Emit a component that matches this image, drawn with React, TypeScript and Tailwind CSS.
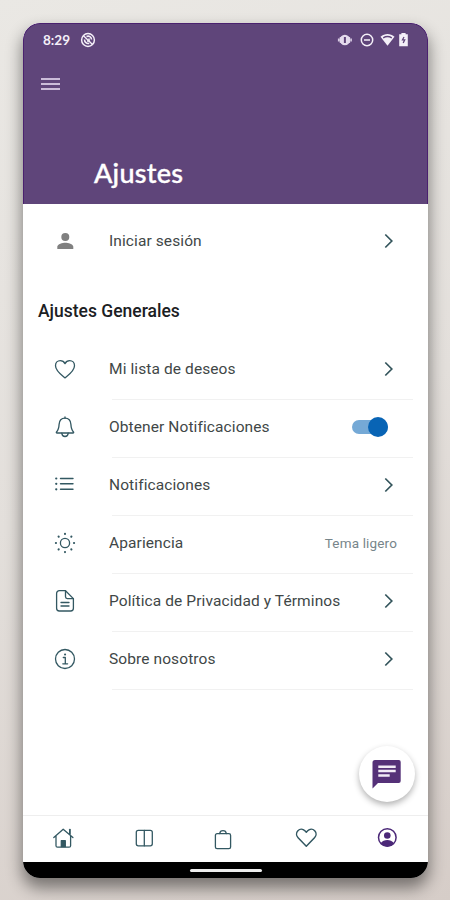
import type { ReactNode } from "react";

function IconBox({ children, className = "" }: { children: ReactNode; className?: string }) {
  return (
    <svg
      width="24"
      height="24"
      viewBox="0 0 24 24"
      fill="none"
      stroke="currentColor"
      strokeWidth="1.3"
      strokeLinecap="round"
      strokeLinejoin="round"
      className={`shrink-0 ${className}`}
      aria-hidden
    >
      {children}
    </svg>
  );
}

function HeartIcon() {
  return (
    <IconBox>
      <path d="M12 20.9C8.6 18.1 2.5 13.8 2.5 8.7c0-3 2.1-5 4.8-5 2 0 3.8 1.1 4.7 2.9.9-1.8 2.7-2.9 4.7-2.9 2.7 0 4.8 2 4.8 5 0 5.100-6.100 9.400-9.500 12.200Z" />
    </IconBox>
  );
}

function BellIcon() {
  return (
    <IconBox>
      <path d="M12 3.200c-3.600 0-5.700 2.600-5.900 6.200-.2 3.600-.4 5.400-2.600 7.600-.4.500-.1 1 .5 1h16c.6 0 .9-.5.5-1-2.200-2.200-2.400-4-2.600-7.600-.2-3.600-2.300-6.200-5.900-6.200Z" />
      <path d="M12 3.200V2M8.800 18.200c.2 2 1.500 3.300 3.200 3.300s3-1.300 3.200-3.300" />
    </IconBox>
  );
}

function ListIcon() {
  return (
    <IconBox>
      <path d="M7.500 5.500h12.500M7.500 10.800h12.500M7.500 16.300h12.500" strokeWidth="1.400" />
      <path d="M3.200 5.500h.1M3.200 10.800h.1M3.200 16.300h.1" strokeWidth="2.200" />
    </IconBox>
  );
}

function SunIcon() {
  return (
    <IconBox>
      <circle cx="12" cy="12" r="4.600" />
      <path
        d="M12 2.900v.1M12 21v.1M2.900 12h.1M21 12h.1M5.600 5.600l.1.1M18.300 18.300l.1.1M5.600 18.400l.1-.1M18.300 5.700l.1-.1"
        strokeWidth="2.100"
      />
    </IconBox>
  );
}

function DocumentIcon() {
  return (
    <IconBox>
      <path d="M12.500 1.700H6.300a2.700 2.700 0 0 0-2.700 2.700v14.900A2.700 2.700 0 0 0 6.300 22h11.400a2.700 2.700 0 0 0 2.700-2.700V9.600Z" />
      <path d="M12.500 1.700v6.100c0 1 .8 1.800 1.800 1.800h6.100M8 13.500h8M8 17h8" />
    </IconBox>
  );
}

function InfoIcon() {
  return (
    <IconBox>
      <circle cx="12" cy="12" r="9.500" />
      <path d="M10.300 10.500h2v6.200M9.800 16.800h4.800" />
      <path d="M12 7.400h.1" strokeWidth="2" />
    </IconBox>
  );
}

function ChevronIcon() {
  return (
    <IconBox className="text-[#33545b]">
      <path d="m8.300 5.500 6.500 6.500-6.500 6.500" strokeWidth="1.700" strokeLinecap="butt" strokeLinejoin="miter" />
    </IconBox>
  );
}

function HomeIcon() {
  return (
    <IconBox>
      <path d="M2.800 11.500 12.200 3.200l9.700 8.300M5 9.700v10c0 .9.600 1.500 1.500 1.500h11.600c.9 0 1.500-.6 1.500-1.500v-10" />
      <path d="M18.900 8V3.600" strokeWidth="1.800" />
      <path d="M10.300 14.700h4v6h-4Z" fill="currentColor" />
    </IconBox>
  );
}

function ColumnsIcon() {
  return (
    <IconBox>
      <rect x="4.300" y="4.300" width="16" height="15.500" rx="2" />
      <path d="M12.300 4.300v15.500" />
    </IconBox>
  );
}

function BagIcon() {
  return (
    <IconBox>
      <path d="M6.100 6.700h11.800c1 0 1.700.7 1.700 1.700v11.500c0 1-.7 1.800-1.700 1.800H6.100c-1 0-1.700-.8-1.700-1.800V8.400c0-1 .7-1.700 1.700-1.700Z" />
      <path d="M8.700 6.500C8.900 4.800 10.200 3.600 12 3.600s3.100 1.200 3.300 2.900" />
    </IconBox>
  );
}

function NavHeartIcon() {
  return (
    <IconBox>
      <path
        d="m12.300 20.200-8.200-8.400c-2-2.100-2-5.200-.2-7.100 2-2 5-1.900 7 .1l1.400 1.400 1.400-1.400c2-2 5-2.100 7-.1 1.800 1.900 1.800 5-.2 7.100Z"
        strokeWidth="1.500"
      />
    </IconBox>
  );
}

function ProfileIcon() {
  return (
    <IconBox className="text-[#4b2878]">
      <circle cx="12.300" cy="11.500" r="8.800" strokeWidth="1.500" />
      <circle cx="12.300" cy="9.500" r="3.300" fill="currentColor" stroke="none" />
      <path
        d="M5.700 17.200c1.600-2 4-3.100 6.600-3.100s5 1.100 6.600 3.100c-1.600 2-4 3.300-6.600 3.300s-5-1.300-6.600-3.300Z"
        fill="currentColor"
        stroke="none"
      />
    </IconBox>
  );
}

function StatusBar() {
  return (
    <div className="flex h-[32px] items-center justify-between pl-[19px] pr-[18px] text-[#f4eff8]">
      <div className="flex items-center gap-[9px]">
        <span className="w-7 pt-px font-['Lato',sans-serif] text-[13.5px] font-bold leading-none">8:29</span>
        <svg width="16" height="16" viewBox="0 0 16 16" fill="none" stroke="currentColor" aria-hidden>
          <circle cx="8" cy="8" r="6.400" strokeWidth="1.500" />
          <path d="m3.500 3.800 9 8.700" strokeWidth="1.400" />
          <path d="M6.500 4.500c2.500-1 5 .5 5 3M4.500 7.500c0 2.800 2.300 4.500 4.700 3.800M7 9h2V6.500" strokeWidth="1.600" />
        </svg>
      </div>
      <svg width="72" height="16" viewBox="0 0 72 16" fill="none" stroke="currentColor" aria-hidden>
        <path d="M1.700 6.500v3M3.500 5v6M14.100 6.500v3M12.300 5v6" strokeWidth="1.600" stroke="#d9cce4" />
        <circle cx="7.900" cy="8" r="5.200" fill="#e5dbed" stroke="none" />
        <path d="M7.900 5v6" stroke="#5f457a" strokeWidth="2" />
        <circle cx="30" cy="8" r="5.700" strokeWidth="1.500" />
        <path d="M27 8h6" strokeWidth="1.700" />
        <path d="M43.500 4.700c4.300-3.500 9.700-3.500 14 0L50.500 13.800Z" fill="currentColor" stroke="none" />
        <path d="M46.200 5.800c2.700-1.600 5.900-1.600 8.600 0" stroke="#5f457a" strokeWidth="1.500" />
        <path d="M62.200 2.300h2.200V1h4.200v1.300h2.200v12h-8.600Z" fill="currentColor" stroke="none" />
        <path d="m67 5-1.500 2.800h2.200L66.200 11" stroke="#5f457a" strokeWidth="1.300" />
      </svg>
    </div>
  );
}

interface SettingsRow {
  icon: ReactNode;
  label: string;
  control: ReactNode;
}

const toggle = (
  <div className="mr-[25px] flex h-[14px] w-[36px] items-center justify-end rounded-full bg-[#75a9d6]">
    <div className="size-5 shrink-0 rounded-full bg-[#0864b5]" />
  </div>
);

const chevron = (
  <div className="mr-3">
    <ChevronIcon />
  </div>
);

const rows: SettingsRow[] = [
  { icon: <HeartIcon />, label: "Mi lista de deseos", control: chevron },
  { icon: <BellIcon />, label: "Obtener Notificaciones", control: toggle },
  { icon: <ListIcon />, label: "Notificaciones", control: chevron },
  {
    icon: <SunIcon />,
    label: "Apariencia",
    control: <span className="mr-4 text-[13.5px] tracking-[0.15px] text-[#77858a]">Tema ligero</span>,
  },
  { icon: <DocumentIcon />, label: "Política de Privacidad y Términos", control: chevron },
  { icon: <InfoIcon />, label: "Sobre nosotros", control: chevron },
];

export default function App() {
  return (
    <div className="h-[900px] w-[450px] overflow-hidden bg-linear-160 from-[#eae8e4] via-[#e3dfdb] to-[#d6cdc8] pl-[23px] pt-[23px] font-['Roboto',sans-serif]">
      <div className="relative flex h-[855px] w-[405px] flex-col overflow-hidden rounded-[17px] bg-white shadow-[0_9px_16px_1px_rgba(0,0,0,0.45)]">
        <header className="h-[181px] shrink-0 rounded-t-[17px] border border-b-0 border-[#4a216f] bg-[#5f457a]">
          <StatusBar />
          <div className="flex h-[56px] items-center pl-[17px]">
            <div className="flex w-[19px] flex-col gap-[3px]">
              <span className="h-[2px] bg-[#cbbcd9]" />
              <span className="h-[2px] bg-[#cbbcd9]" />
              <span className="h-[2px] bg-[#cbbcd9]" />
            </div>
          </div>
          <h1 className="mt-[44px] pl-[70px] font-['Lato',sans-serif] text-[27px] font-medium leading-[34px] tracking-[0.25px] text-white [-webkit-text-stroke:0.4px_white]">
            Ajustes
          </h1>
        </header>

        <main className="flex-1 text-[15.5px] tracking-[0.1px] text-[#414747]">
          <div className="flex h-[74px] items-center pl-[30px] pr-[27px]">
            <svg width="24" height="24" viewBox="0 0 24 24" fill="#808080" aria-hidden>
              <circle cx="12.300" cy="8" r="4" />
              <path d="M4.300 20v-2.200c0-2.700 5.300-4.100 8-4.100s8 1.400 8 4.100V20Z" />
            </svg>
            <span className="ml-8 flex-1 pt-[2px]">Iniciar sesión</span>
            <ChevronIcon />
          </div>

          <h2 className="mt-[19px] pl-[15px] text-[17.5px] font-medium leading-[28px] tracking-[0px] text-[#1b2023]">
            Ajustes Generales
          </h2>

          <div className="mt-[17px]">
            {rows.map((row) => (
              <div key={row.label} className="pr-[15px]">
                <div className="flex h-[57px] items-center pb-[3px] pl-[30px] text-[#335862]">
                  {row.icon}
                  <span className="ml-8 flex-1 whitespace-nowrap pt-[2px] text-[#414747]">{row.label}</span>
                  {row.control}
                </div>
                <div className="ml-[89px] h-px bg-[#f1f1f1]" />
              </div>
            ))}
          </div>
        </main>

        <button
          type="button"
          aria-label="Chat"
          className="absolute bottom-[76px] right-[13px] flex size-14 items-center justify-center rounded-full bg-white shadow-[0_3px_6px_rgba(0,0,0,0.3)]"
        >
          <svg width="30" height="30" viewBox="0 0 30 30" aria-hidden>
            <path d="M3 1h23.500A2 2 0 0 1 28.700 3v19a2 2 0 0 1-2 2H6l-5.500 5.500V3.500A2.500 2.500 0 0 1 3 1Z" fill="#553178" />
            <path d="M6.300 7.800h17.400M6.300 12h17.400M6.300 16.500h11.400" stroke="#f2ecf6" strokeWidth="2.600" />
          </svg>
        </button>

        <nav className="flex h-[47px] shrink-0 items-start justify-between border-t border-[#eeeeee] pl-7 pr-[29px] pt-[10px] text-[#335862]">
          <HomeIcon />
          <ColumnsIcon />
          <div className="-ml-[3px] pt-[1px]">
            <BagIcon />
          </div>
          <div className="ml-[2px]">
            <NavHeartIcon />
          </div>
          <ProfileIcon />
        </nav>
        <div className="flex h-4 shrink-0 justify-center bg-black pt-[7px]">
          <div className="h-[3px] w-[72px] rounded-full bg-[#eeeeee]" />
        </div>
      </div>
    </div>
  );
}
